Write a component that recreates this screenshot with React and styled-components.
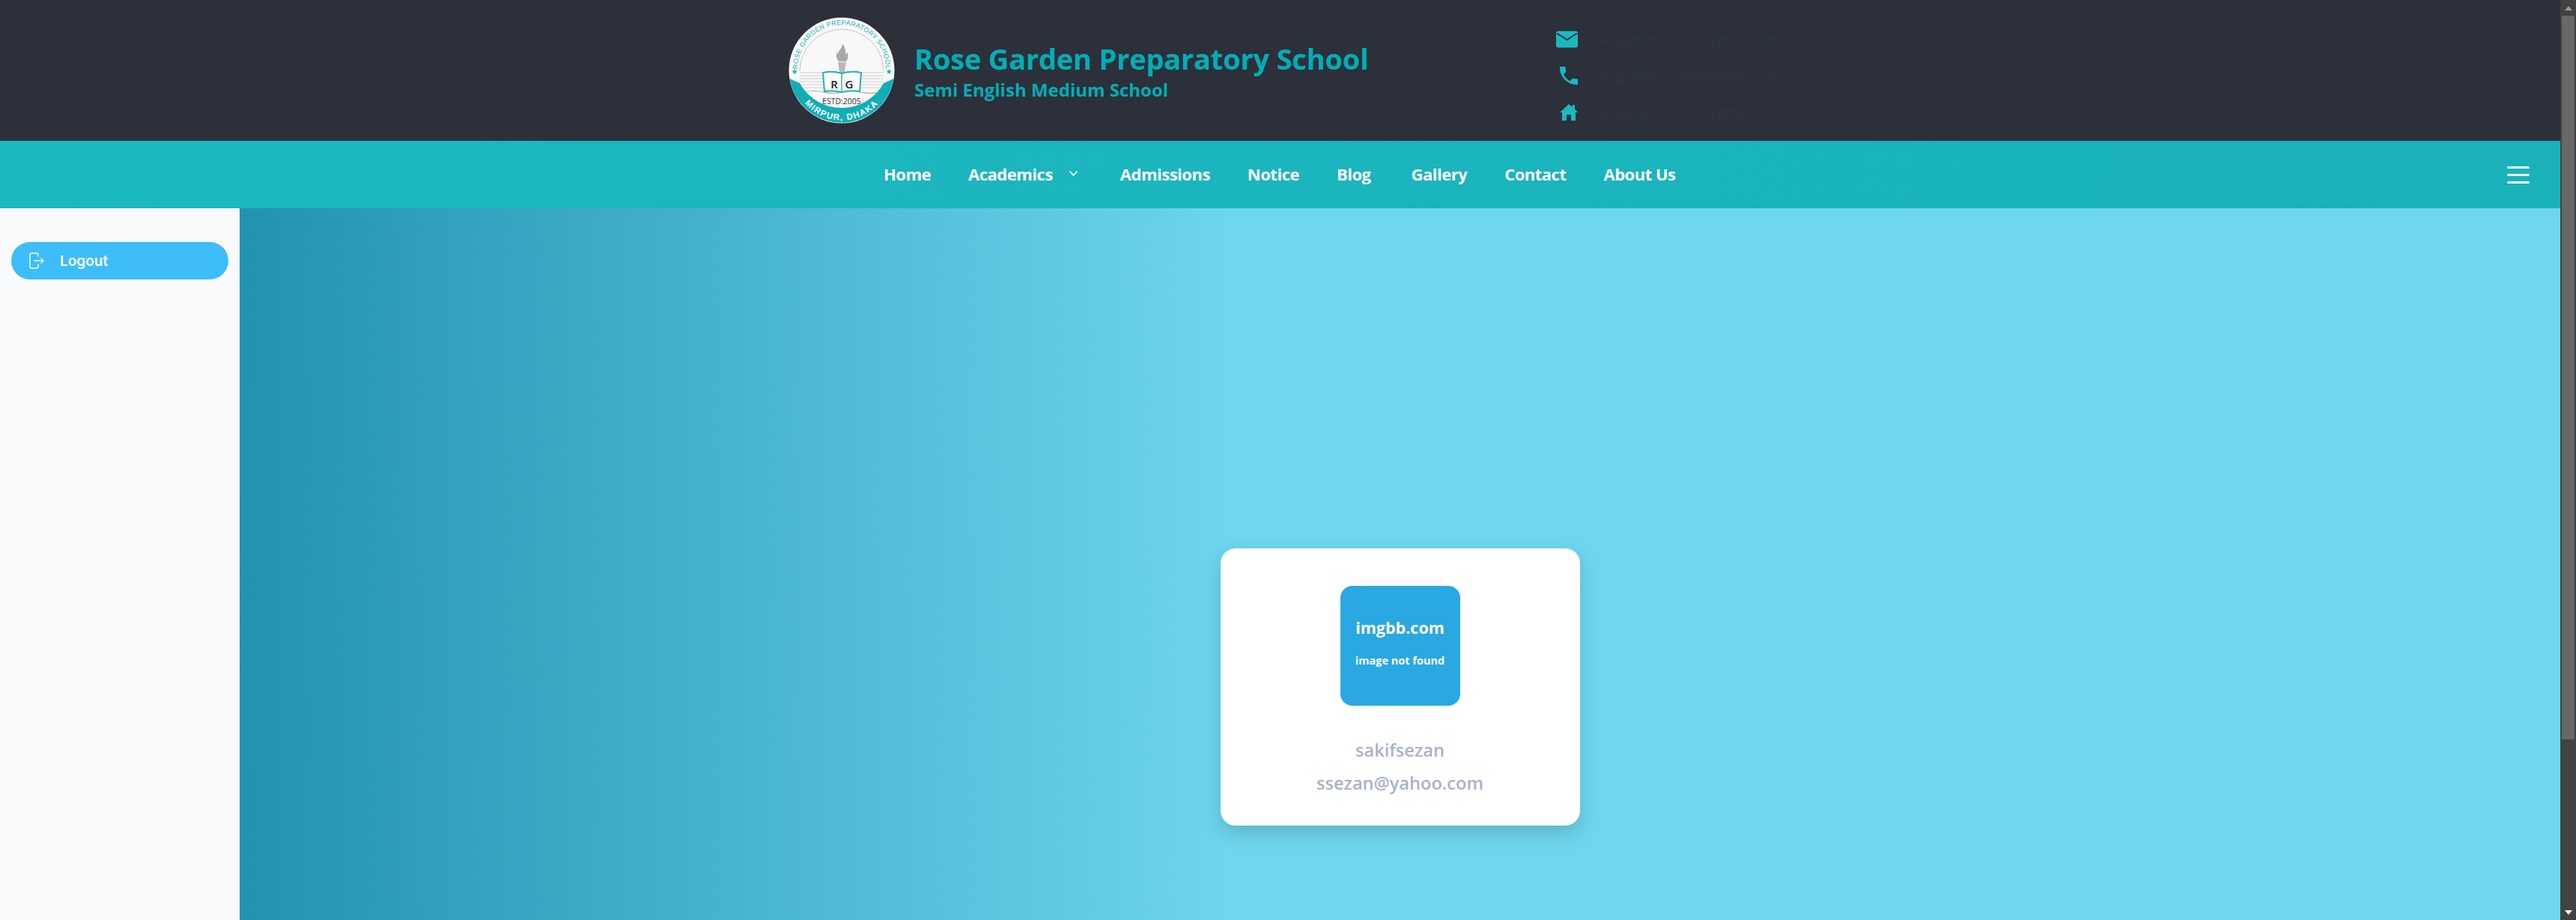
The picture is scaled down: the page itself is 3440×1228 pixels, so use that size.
import React from 'react';
import styled, { createGlobalStyle } from 'styled-components';

const GlobalStyle = createGlobalStyle`
  html, body {
    margin: 0;
    height: 100%;
    overflow: hidden;
    font-family: "Open Sans", "Noto Sans", sans-serif;
  }
`;

const Page = styled.div`
  display: flex;
  height: 1228px;
  width: 3440px;
  overflow: hidden;
`;

const Content = styled.div`
  flex: 1;
  display: flex;
  flex-direction: column;
  min-width: 0;
`;

const ScrollTrack = styled.div`
  width: 21px;
  background: #424242;
  display: flex;
  flex-direction: column;
  align-items: center;
`;

const ScrollArrow = styled.div`
  height: 21px;
  width: 21px;
  flex: none;
  display: flex;
  align-items: center;
  justify-content: center;
  margin-top: ${props => (props.$down ? 'auto' : '0')};
`;

const ScrollThumb = styled.div`
  width: 17px;
  height: 966px;
  background: #686868;
`;

const Header = styled.header`
  height: 188px;
  background: #2b303b;
  display: flex;
  align-items: center;
  padding-left: 1053px;
  flex: none;
`;

const Brand = styled.div`
  display: flex;
  align-items: center;
  gap: 26px;
  width: 1025px;
`;

const BrandText = styled.div`
  color: #00aeb5;
  margin-top: 0;
`;

const SchoolName = styled.div`
  font-size: 38px;
  font-weight: 700;
  letter-spacing: -0.2px;
  line-height: 52px;
`;

const Tagline = styled.div`
  font-size: 24px;
  font-weight: 700;
  line-height: 32px;
`;

const ContactList = styled.div`
  display: flex;
  flex-direction: column;
  gap: 20px;
  margin-top: 14px;
`;

const ContactRow = styled.div`
  height: 29px;
  display: flex;
  align-items: center;
  gap: 10px;
  color: #323843;
  font-size: 18px;
  font-weight: 300;
  white-space: nowrap;
`;

const IconSlot = styled.div`
  width: 29px;
  display: flex;
  justify-content: flex-end;
  color: #1ab9c2;
`;

const NavBar = styled.nav`
  height: 90px;
  flex: none;
  box-sizing: border-box;
  padding: 0 41px 3px 1180px;
  background: linear-gradient(to right, #1cb8c0, #19b2ba);
  display: flex;
  align-items: center;
`;

const NavItem = styled.a`
  color: #fff;
  font-size: 22px;
  font-weight: 700;
  letter-spacing: -0.5px;
  display: flex;
  align-items: center;
  margin-right: ${props => props.$gap || 50}px;
`;

const Caret = styled.svg`
  margin-left: 21px;
`;

const Burger = styled.div`
  margin-left: auto;
  margin-top: 3px;
  width: 30px;
  display: flex;
  flex-direction: column;
  gap: 7px;
`;

const BurgerLine = styled.span`
  height: 3px;
  border-radius: 2px;
  background: #fff;
`;

const Body = styled.div`
  flex: 1;
  display: flex;
  min-height: 0;
`;

const Sidebar = styled.aside`
  width: 320px;
  flex: none;
  background: #f9fafc;
  padding: 45px 15px 0;
  box-sizing: border-box;
`;

const LogoutButton = styled.div`
  height: 50px;
  border-radius: 25px;
  background: #3dbdfa;
  color: #fff;
  display: flex;
  align-items: center;
  padding-left: 24px;
  gap: 21px;
  font-family: Inter, "Open Sans", sans-serif;
  font-size: 19px;
  font-weight: 600;
`;

const Main = styled.main`
  flex: 1;
  background: linear-gradient(to right, #2193b0 0, #6dd5ed 1320px);
  display: flex;
  justify-content: center;
  padding-top: 454px;
`;

const Card = styled.div`
  width: 480px;
  height: 370px;
  box-sizing: border-box;
  background: #fff;
  border-radius: 20px;
  padding-top: 50px;
  box-shadow: 0 10px 25px rgba(0, 0, 0, 0.15);
  display: flex;
  flex-direction: column;
  align-items: center;
`;

const Avatar = styled.div`
  width: 160px;
  height: 160px;
  border-radius: 16px;
  background: #29a8e2;
  color: #fff;
  display: flex;
  flex-direction: column;
  align-items: center;
  font-weight: 700;
`;

const AvatarTitle = styled.div`
  font-size: 21.5px;
  line-height: 30px;
  margin-top: 41px;
`;

const AvatarNote = styled.div`
  font-size: 14.5px;
  line-height: 20px;
  margin-top: 19px;
`;

const CardName = styled.div`
  color: #a9b3c5;
  font-size: 23.6px;
  font-weight: 600;
  line-height: 44px;
  margin-top: ${props => props.$first ? 37 : 0}px;
`;

function SchoolLogo() {
  return (
    <svg width="142" height="142" viewBox="0 0 142 142" style={{ flex: 'none' }}>
      <defs>
        <path id="topArc" d="M 13 80 A 59 59 0 1 1 129 80" />
        <path id="bottomArc" d="M 9 92 A 65 65 0 0 0 133 92" />
      </defs>
      <circle cx="71" cy="71" r="70.5" fill="#f8f8f8" />
      <path d="M 1.5 82 L 15 88 A 64 64 0 0 0 127 88 L 140.5 82 A 70.5 70.5 0 0 1 1.5 82 Z" fill="#12aeb6" />
      <path d="M 15 72 A 56 56 0 0 1 127 72" fill="none" stroke="#c4c4c4" strokeWidth="1" />
      <text fontFamily="Liberation Sans, sans-serif" fontSize="9" fill="#1eb4bc" letterSpacing="0.3">
        <textPath href="#topArc" startOffset="50%" textAnchor="middle">ROSE GARDEN PREPARATORY SCHOOL</textPath>
      </text>
      <text x="8" y="76" fontSize="10" textAnchor="middle" fill="#12aeb6" fontFamily="DejaVu Sans, sans-serif">★</text>
      <text x="134" y="76" fontSize="10" textAnchor="middle" fill="#12aeb6" fontFamily="DejaVu Sans, sans-serif">★</text>
      <path d="M 15 74 H 127 M 15 78 H 127 M 15 82 H 127 M 15 86 H 127 M 17 90 H 125 M 19 94 H 123" stroke="#d0d0d0" strokeWidth="1" />
      <path d="M 22 100 q 12 -3 25 0 t 24 0 t 25 0 t 24 0" fill="none" stroke="#a8a8a8" strokeWidth="1.2" />
      <path d="M 72 35 c 1 5 -5 8 -6 14 c -1 -1 -1 -2 -1 -4 c -2 5 -1 11 2 14 h 10 c 3 -4 3 -9 1 -13 c 0 2 -1 3 -2 4 c 1 -5 -1 -11 -4 -15 z" fill="#a9a9a9" />
      <path d="M 66 60 h 11 l -3 18 h -5 z" fill="#b8b8b8" />
      <path d="M 46 74 q 13 -3 25 1 q 13 -4 26 -1 l -2 25 q -12 -2 -24 1 q -12 -3 -23 -1 z" fill="#fafafa" stroke="#1eb4bc" strokeWidth="2" />
      <path d="M 71 75 V 100" stroke="#1eb4bc" strokeWidth="1.4" />
      <text x="61" y="95" fontSize="15" fontWeight="600" textAnchor="middle" fill="#222" fontFamily="Open Sans, sans-serif">R</text>
      <text x="81" y="95" fontSize="15" fontWeight="600" textAnchor="middle" fill="#222" fontFamily="Open Sans, sans-serif">G</text>
      <text x="71" y="116" fontSize="10.5" textAnchor="middle" fill="#333" fontFamily="Open Sans, sans-serif">ESTD:2005</text>
      <text fontFamily="Liberation Sans, sans-serif" fontSize="11.5" fontWeight="700" fill="#fff" letterSpacing="1.4">
        <textPath href="#bottomArc" startOffset="50%" textAnchor="middle">MIRPUR, DHAKA</textPath>
      </text>
    </svg>
  );
}

const MailIcon = () => (
  <svg width="29" height="23" viewBox="0 0 29 23">
    <rect width="29" height="22" y="0.5" rx="3" fill="currentColor" />
    <path d="M1 3.5 L14.5 12 L28 3.5" fill="none" stroke="#2b303b" strokeWidth="2" />
  </svg>
);

const PhoneIcon = () => (
  <svg width="24" height="24" viewBox="3 3 18 18">
    <path d="M21 15.46l-5.27-.61-2.52 2.52c-2.83-1.44-5.15-3.75-6.59-6.59l2.53-2.53L8.54 3H3.03C2.45 13.18 10.82 21.55 21 20.97v-5.51z" fill="currentColor" />
  </svg>
);

const HomeIcon = () => (
  <svg width="24" height="23" viewBox="0 0 24 23">
    <path d="M12 0 L17 4 V1 H20 V7 L24 11 H21 V22 H15 V14 H9 V22 H3 V11 H0 Z" fill="currentColor" />
  </svg>
);

const LogoutIcon = () => (
  <svg width="20" height="22" viewBox="0 0 20 22" fill="none" stroke="#fff" strokeWidth="1.4" strokeLinecap="round" strokeLinejoin="round">
    <path d="M12 5 V2.5 A1.5 1.5 0 0 0 10.5 1 H2.5 A1.5 1.5 0 0 0 1 2.5 V19.5 A1.5 1.5 0 0 0 2.5 21 H10.5 A1.5 1.5 0 0 0 12 19.5 V16" />
    <path d="M7 11 H19 M16 8 L19 11 L16 14" />
  </svg>
);

const email = 'rose_garden_school@gmail.com';

export default function App() {
  return (
    <Page>
      <GlobalStyle />
      <Content>
        <Header>
          <Brand>
            <SchoolLogo />
            <BrandText>
              <SchoolName>Rose Garden Preparatory School</SchoolName>
              <Tagline>Semi English Medium School</Tagline>
            </BrandText>
          </Brand>
          <ContactList>
            <ContactRow><IconSlot><MailIcon /></IconSlot>{email}</ContactRow>
            <ContactRow><IconSlot><PhoneIcon /></IconSlot>{email}</ContactRow>
            <ContactRow><IconSlot><HomeIcon /></IconSlot>{email}</ContactRow>
          </ContactList>
        </Header>
        <NavBar>
          <NavItem>Home</NavItem>
          <NavItem $gap={56}>
            Academics
            <Caret width="13" height="9" viewBox="0 0 13 9" fill="none" stroke="#fff" strokeWidth="1.6"><path d="M1.5 1.5 L6.5 7 L11.5 1.5" /></Caret>
          </NavItem>
          <NavItem>Admissions</NavItem>
          <NavItem>Notice</NavItem>
          <NavItem $gap={54}>Blog</NavItem>
          <NavItem>Gallery</NavItem>
          <NavItem>Contact</NavItem>
          <NavItem>About Us</NavItem>
          <Burger>
            <BurgerLine />
            <BurgerLine />
            <BurgerLine />
          </Burger>
        </NavBar>
        <Body>
          <Sidebar>
            <LogoutButton><LogoutIcon />Logout</LogoutButton>
          </Sidebar>
          <Main>
            <Card>
              <Avatar>
                <AvatarTitle>imgbb.com</AvatarTitle>
                <AvatarNote>image not found</AvatarNote>
              </Avatar>
              <CardName $first>sakifsezan</CardName>
              <CardName>ssezan@yahoo.com</CardName>
            </Card>
          </Main>
        </Body>
      </Content>
      <ScrollTrack>
        <ScrollArrow>
          <svg width="10" height="6" viewBox="0 0 10 6"><path d="M5 0 L10 6 H0 Z" fill="#9a9a9a" /></svg>
        </ScrollArrow>
        <ScrollThumb />
        <ScrollArrow $down>
          <svg width="10" height="6" viewBox="0 0 10 6"><path d="M0 0 H10 L5 6 Z" fill="#fff" /></svg>
        </ScrollArrow>
      </ScrollTrack>
    </Page>
  );
}
